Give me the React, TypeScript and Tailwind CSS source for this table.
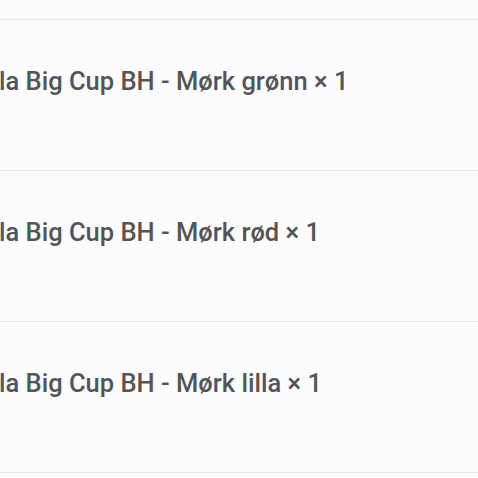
export default function App() {
  const items = ['Mørk grønn', 'Mørk rød', 'Mørk lilla']
  return (
    <div className="w-[478px] h-[478px] overflow-hidden bg-[#fcfcfe] pt-[19px] font-['Roboto',sans-serif]">
      <div className="border-b border-[#e7e7ea]">
        {items.map((color) => (
          <div key={color} className="h-[151px] border-t border-[#e7e7ea] pt-[43px]">
            <p className="-ml-[1px] whitespace-nowrap text-[25.5px] leading-[36px] font-medium text-[#555558]">
              la Big Cup BH - {color} × 1
            </p>
          </div>
        ))}
      </div>
    </div>
  )
}
